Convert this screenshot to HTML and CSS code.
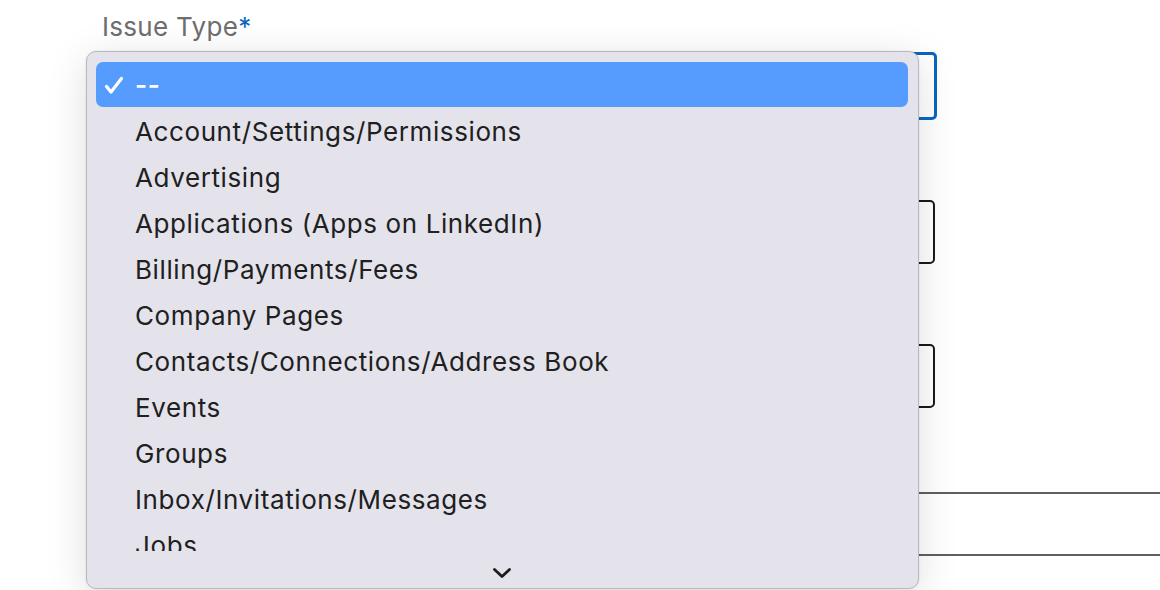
FILE: index.html
```html
<!DOCTYPE html>
<html>
<head>
<meta charset="utf-8">
<link rel="stylesheet" href="styles.css">
</head>
<body>
<div class="page">
  <form class="form">
    <div class="label">Issue Type<span class="req">*</span></div>
    <div class="select"></div>
    <div class="input first"></div>
    <div class="input"></div>
  </form>
  <div class="rule r1"></div>
  <div class="rule r2"></div>

  <div class="menu">
    <ul class="list">
      <li class="item selected">
        <svg class="check" width="20" height="19" viewBox="0 0 20 19"><path d="M2.5 10.5 L7 16 L17.5 2.5" fill="none" stroke="#fff" stroke-width="3.2" stroke-linecap="round" stroke-linejoin="round"/></svg>
        <span class="dash">--</span>
      </li>
      <li class="item"><span>Account/Settings/Permissions</span></li>
      <li class="item"><span>Advertising</span></li>
      <li class="item"><span>Applications (Apps on LinkedIn)</span></li>
      <li class="item"><span>Billing/Payments/Fees</span></li>
      <li class="item"><span>Company Pages</span></li>
      <li class="item"><span>Contacts/Connections/Address Book</span></li>
      <li class="item"><span>Events</span></li>
      <li class="item"><span>Groups</span></li>
      <li class="item"><span>Inbox/Invitations/Messages</span></li>
      <li class="item"><span>Jobs</span></li>
    </ul>
    <div class="more">
      <svg width="20" height="12" viewBox="0 0 20 12"><path d="M2.5 2.5 L10 9.5 L17.5 2.5" fill="none" stroke="#1c1c1c" stroke-width="2.8" stroke-linecap="round" stroke-linejoin="round"/></svg>
    </div>
  </div>
</div>
</body>
</html>
```

FILE: styles.css
```css
* { box-sizing: border-box; }
html, body { margin: 0; padding: 0; background: #fff; }
body {
  width: 1160px;
  height: 590px;
  overflow: hidden;
  font-family: Inter, "Noto Sans", "Liberation Sans", sans-serif;
}
.page { position: relative; width: 1160px; height: 590px; }

.form {
  margin: 0;
  padding: 10px 0 0 102px;
  width: 937px;
  display: flex;
  flex-direction: column;
}
.label {
  font-size: 26px;
  line-height: 34px;
  letter-spacing: 0.3px;
  color: #6e6e6e;
  height: 42px;
}
.req { color: #0a66c2; }
.select {
  height: 68px;
  border: 3px solid #0a66c2;
  border-radius: 5px;
}
.input {
  margin-top: 80px;
  height: 64px;
  border: 2px solid #1a1a1a;
  border-radius: 5px;
  margin-right: 2px;
}

.rule {
  position: absolute;
  left: 600px;
  right: 0;
  height: 2px;
  background: #5f5f5f;
}
.r1 { top: 492px; }
.r2 { top: 554px; }

.menu {
  position: absolute;
  left: 86px;
  top: 51px;
  width: 833px;
  height: 538px;
  background: #e4e3eb;
  border: 1px solid #b9b8bf;
  border-radius: 10px;
  box-shadow: 0 8px 40px rgba(0, 0, 0, 0.13), 0 0 3px rgba(0, 0, 0, 0.08);
  padding: 10px 10px 0 9px;
}
.list {
  list-style: none;
  margin: 0;
  padding: 0;
  height: 489px;
  overflow: hidden;
}
.item {
  height: 46px;
  display: flex;
  align-items: center;
  padding-left: 39px;
  font-size: 26px;
  color: #202020;
  position: relative;
  letter-spacing: 0.6px;
}
.item.selected {
  height: 45px;
  margin-bottom: 1px;
  background: #559cfe;
  border-radius: 7px;
  color: #fff;
}
.dash { font-weight: 600; }
.check {
  position: absolute;
  left: 8px;
  top: 14px;
}
.more {
  height: 37px;
  padding-top: 6px;
  display: flex;
  justify-content: center;
  align-items: center;
}
```
